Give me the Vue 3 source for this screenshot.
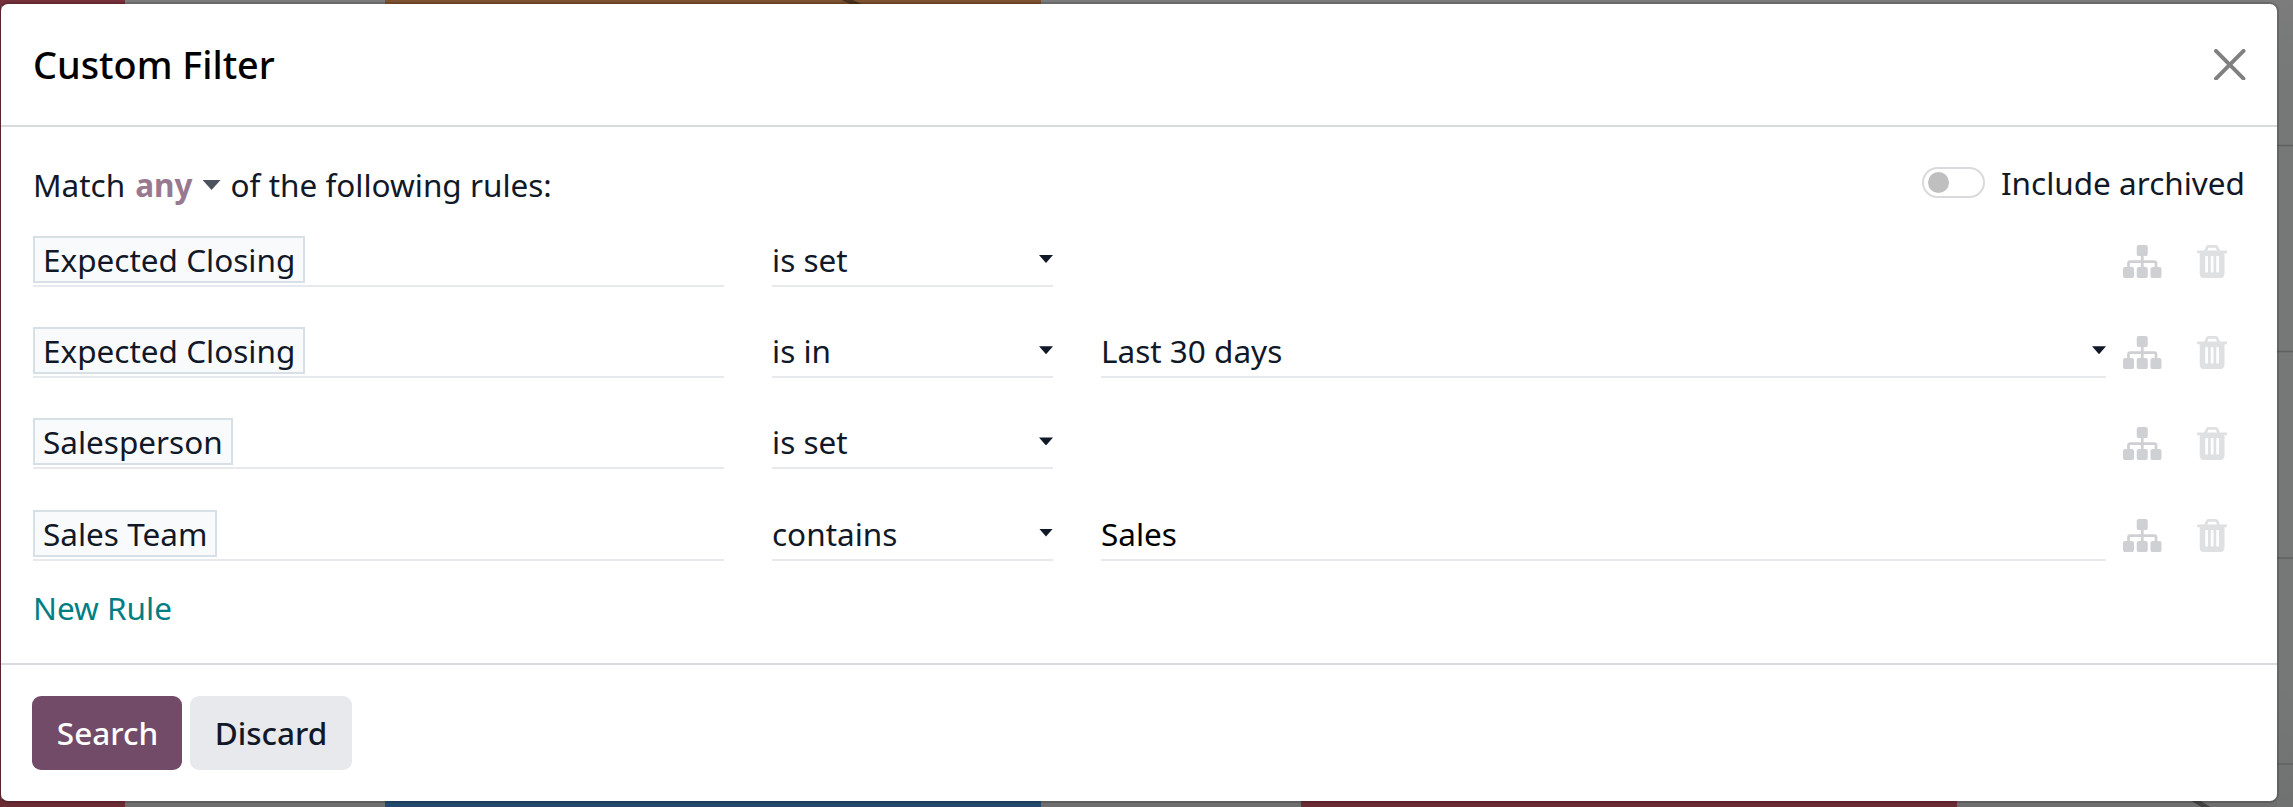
<script setup>
const rules = [
  { field: 'Expected Closing', operator: 'is set' },
  { field: 'Expected Closing', operator: 'is in', value: 'Last 30 days', select: true },
  { field: 'Salesperson', operator: 'is set' },
  { field: 'Sales Team', operator: 'contains', value: 'Sales' },
]
</script>

<template>
  <div class="screen">
    <div class="strip top"><i class="red"></i><i class="gap"></i><i class="orange"></i></div>
    <div class="strip bottom"><i class="red"></i><i class="gap"></i><i class="blue"></i><i class="gap"></i><i class="red wide"></i></div>
    <svg class="backdrop" width="2293" height="807">
      <path d="M843 -2L862 7M2193 799L2212 811" stroke="#000" stroke-opacity=".4" stroke-width="5" />
      <path d="M2277 145.500h16M2277 351.500h16M2277 558h16M2277 764h16" stroke="#5f6160" stroke-width="1.500" />
    </svg>
    <section class="modal">
      <header class="head">
        <h4>Custom Filter</h4>
        <button class="close" aria-label="Close">
          <svg viewBox="0 0 16 16"><path d="M.293.293a1 1 0 0 1 1.414 0L8 6.586 14.293.293a1 1 0 1 1 1.414 1.414L9.414 8l6.293 6.293a1 1 0 0 1-1.414 1.414L8 9.414l-6.293 6.293a1 1 0 0 1-1.414-1.414L6.586 8 .293 1.707a1 1 0 0 1 0-1.414z" /></svg>
        </button>
      </header>
      <main class="body">
        <div class="match-row">
          <div class="match"><span>Match</span><b>any</b><i class="caret big"></i><span>of the following rules:</span></div>
          <label class="archived"><span class="switch"><i></i></span><span>Include archived</span></label>
        </div>
        <div class="rules">
          <div v-for="(rule, i) in rules" :key="i" class="rule">
            <div class="cell"><span class="tag">{{ rule.field }}</span></div>
            <div class="cell"><span>{{ rule.operator }}</span><i class="caret"></i></div>
            <div v-if="rule.value" class="cell" :class="{ input: !rule.select }"><span>{{ rule.value }}</span><i v-if="rule.select" class="caret"></i></div>
            <div v-else></div>
            <div class="actions">
              <svg class="sitemap" viewBox="0 128 1792 1536"><path d="M1792 1248v320q0 40-28 68t-68 28h-320q-40 0-68-28t-28-68v-320q0-40 28-68t68-28h96v-192h-512v192h96q40 0 68 28t28 68v320q0 40-28 68t-68 28h-320q-40 0-68-28t-28-68v-320q0-40 28-68t68-28h96v-192h-512v192h96q40 0 68 28t28 68v320q0 40-28 68t-68 28h-320q-40 0-68-28t-28-68v-320q0-40 28-68t68-28h96v-192q0-52 38-90t90-38h512v-192h-96q-40 0-68-28t-28-68v-320q0-40 28-68t68-28h320q40 0 68 28t28 68v320q0 40-28 68t-68 28h-96v192h512q52 0 90 38t38 90v192h96q40 0 68 28t28 68z" /></svg>
              <svg class="trash" viewBox="192 128 1408 1536"><path d="M704 1376v-704q0-14-9-23t-23-9h-64q-14 0-23 9t-9 23v704q0 14 9 23t23 9h64q14 0 23-9t9-23zm256 0v-704q0-14-9-23t-23-9h-64q-14 0-23 9t-9 23v704q0 14 9 23t23 9h64q14 0 23-9t9-23zm256 0v-704q0-14-9-23t-23-9h-64q-14 0-23 9t-9 23v704q0 14 9 23t23 9h64q14 0 23-9t9-23zm-544-992h448l-48-117q-7-9-17-11h-317q-10 2-17 11zm928 32v64q0 14-9 23t-23 9h-96v948q0 83-47 143.500t-113 60.500h-832q-66 0-113-58.500t-47-141.500v-952h-96q-14 0-23-9t-9-23v-64q0-14 9-23t23-9h309l70-167q15-37 54-63t79-26h320q40 0 79 26t54 63l70 167h309q14 0 23 9t9 23z" /></svg>
            </div>
          </div>
        </div>
        <a class="new-rule">New Rule</a>
      </main>
      <footer class="foot">
        <button class="btn primary">Search</button>
        <button class="btn">Discard</button>
      </footer>
    </section>
  </div>
</template>

<style scoped>
.screen {
  position: relative;
  box-sizing: border-box;
  width: 2293px;
  height: 807px;
  padding: 4px 16px 6px 1px;
  overflow: hidden;
  background: linear-gradient(90deg, #6b2a35 1px, transparent 1px), linear-gradient(#7b7c7b, #757876 12%, #757876 85%, #707271);
  font-family: "Noto Sans", sans-serif;
  font-size: 31.5px;
  line-height: 47px;
  color: #111827;
}
.strip { position: absolute; left: 0; display: flex; width: 2277px; height: 6px; background: #7c7c7c; }
.strip.top { top: 0; }
.strip.bottom { bottom: 0; height: 8px; background: #6d6e6d; }
.strip .red { width: 125px; background: #76303a; }
.strip .gap { width: 260px; }
.strip .orange { width: 656px; background: #7d5230; }
.strip .blue { width: 656px; background: #234a6d; }
.strip.bottom .red { background: #6a2b34; }
.strip.bottom .wide { width: 656px; }
.backdrop { position: absolute; inset: 0; }
.modal {
  position: relative;
  display: flex;
  flex-direction: column;
  box-sizing: border-box;
  width: 2276px;
  height: 797px;
  border-radius: 7px;
  background: #fff;
  box-shadow: 0 0 0 2px rgba(0, 0, 0, .15);
}
.head {
  display: flex;
  align-items: center;
  justify-content: space-between;
  box-sizing: border-box;
  height: 123px;
  padding: 0 31.500px 0 32px;
  border-bottom: 2px solid #d8dadd;
}
h4 { margin: 0; font-size: 37.8px; line-height: 56px; font-weight: 500; color: #000; }
button { font: inherit; border: 0; }
.close { width: 31.5px; height: 31.5px; padding: 0; background: none; }
.close svg { display: block; width: 100%; height: 100%; fill: #808080; }
.body { box-sizing: border-box; height: 536px; padding: 32px 32px 0; }
.match-row { display: flex; justify-content: space-between; height: 77px; }
.match { display: flex; padding-top: 2px; }
.match b { margin-left: 10px; color: #98798f; }
.caret { width: 14px; height: 8px; background: #111827; clip-path: polygon(0 0, 100% 0, 50% 100%); }
.caret.big { width: 18px; height: 10px; margin: 19px 10px 0 10px; background: #4c525e; }
.archived { display: flex; gap: 16px; }
.switch {
  box-sizing: border-box;
  width: 63px;
  height: 31px;
  margin-top: 8px;
  padding: 3px 4px;
  border: 2px solid #d8dadd;
  border-radius: 16px;
}
.switch i { display: block; width: 21px; height: 21px; border-radius: 50%; background: #bfbfbf; }
.rules { display: grid; grid-auto-rows: 91.2px; }
.rule { display: grid; grid-template-columns: 691px 281px 1005px auto; column-gap: 48px; align-items: start; }
.rule > * { box-sizing: border-box; height: 51px; }
.cell { display: flex; justify-content: space-between; border-bottom: 2px solid #e7e9ed; }
.cell > span { height: 47px; line-height: 47px; }
.cell.input { color: #000; }
.cell .caret { margin-top: 19px; }
.cell .tag {
  box-sizing: border-box;
  padding: 0 8px;
  line-height: 43px;
  border: 2px solid #d8e0e7;
  background: #f9fafc;
}
.actions { display: flex; gap: 35px; margin-left: -31px; padding-top: 9px; }
.actions svg { display: block; height: 33px; }
.sitemap { width: 38.5px; fill: #cfd0d4; }
.trash { width: 30.25px; fill: #dee0e2; }
.new-rule { display: block; color: #017e84; margin-top: -17px; }
.foot { display: flex; gap: 8px; padding: 31px 31px; border-top: 2px solid #d8dadd; }
.btn {
  box-sizing: border-box;
  height: 74px;
  padding: 0 0 2px;
  width: 162px;
  border-radius: 9px;
  font-weight: 500;
  color: #111827;
  background: #e7e9ed;
}
.btn.primary { width: 150px; padding-left: 1px; color: #fff; background: #714b67; }
</style>

<style>
html, body { overflow: hidden; }
</style>
